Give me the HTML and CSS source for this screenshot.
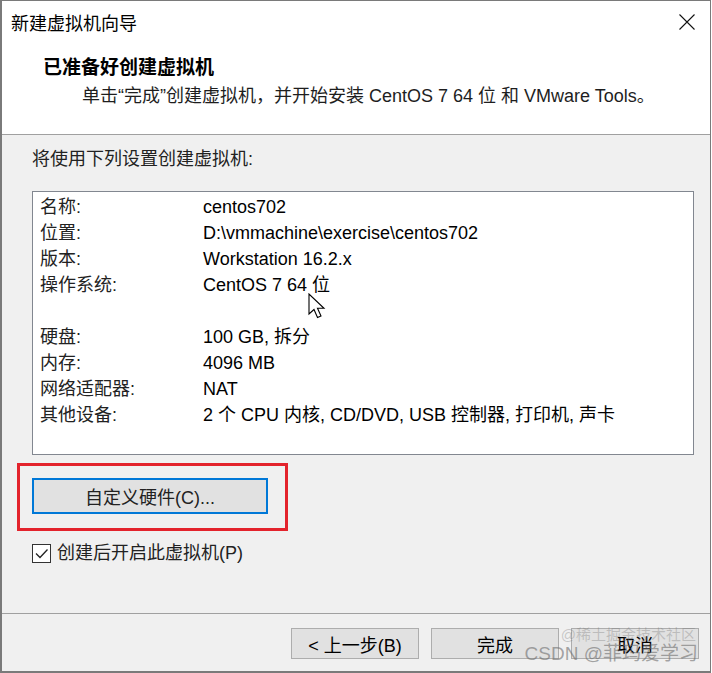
FILE: index.html
```html
<!DOCTYPE html>
<html lang="zh-CN">
<head>
	<meta charset="utf-8">
	<title>新建虚拟机向导</title>
	<link rel="stylesheet" href="styles.css">
</head>
<body>
<div class="window">

	<div class="titlebar">
		<span class="title">新建虚拟机向导</span>
		<svg class="close" width="16" height="16" viewBox="0 0 16 16">
			<path d="M0.5 0.5 L15.5 15.5 M15.5 0.5 L0.5 15.5" stroke="#111" stroke-width="1.1" fill="none"/>
		</svg>
	</div>

	<div class="header">
		<h1>已准备好创建虚拟机</h1>
		<p class="subtitle">单击“完成”创建虚拟机，并开始安装 CentOS 7 64 位 和 VMware Tools。</p>
	</div>

	<div class="body">
		<p class="intro">将使用下列设置创建虚拟机:</p>

		<div class="summary">
			<div class="row"><span class="key">名称:</span><span class="val">centos702</span></div>
			<div class="row"><span class="key">位置:</span><span class="val">D:\vmmachine\exercise\centos702</span></div>
			<div class="row"><span class="key">版本:</span><span class="val">Workstation 16.2.x</span></div>
			<div class="row"><span class="key">操作系统:</span><span class="val">CentOS 7 64 位</span></div>
			<div class="row blank"></div>
			<div class="row"><span class="key">硬盘:</span><span class="val">100 GB, 拆分</span></div>
			<div class="row"><span class="key">内存:</span><span class="val">4096 MB</span></div>
			<div class="row"><span class="key">网络适配器:</span><span class="val">NAT</span></div>
			<div class="row"><span class="key">其他设备:</span><span class="val">2 个 CPU 内核, CD/DVD, USB 控制器, 打印机, 声卡</span></div>
		</div>

		<div class="mark">
			<button class="btn btn-focus">自定义硬件(C)...</button>
		</div>

		<label class="check">
			<span class="box">
				<svg width="15" height="15" viewBox="0 0 15 15">
					<path d="M2 7.5 L6 11.5 L13.5 3.5" stroke="#222" stroke-width="1.3" fill="none"/>
				</svg>
			</span>
			创建后开启此虚拟机(P)
		</label>
	</div>

	<div class="footer">
		<button class="btn">&lt; 上一步(B)</button>
		<button class="btn">完成</button>
		<button class="btn">取消</button>
	</div>

	<!-- mouse pointer from the screenshot -->
	<svg class="pointer" width="19" height="27" viewBox="0 0 19 27">
		<path d="M1 1 L1 21 L6 16.5 L9.5 24.5 L13 23 L9.5 15.3 L16 15.3 Z" fill="#fff" stroke="#000" stroke-width="1.1" stroke-linejoin="miter"/>
	</svg>

	<div class="watermark">
		<span class="wm-top">@稀土掘金技术社区</span>
		<span class="wm-main">CSDN @菲玛爱学习</span>
	</div>
</div>
</body>
</html>
```

FILE: styles.css
```css
/* Reset */

* { margin: 0; padding: 0; box-sizing: border-box; }

body {
	background-color: white;
	font-family: "Liberation Sans", "Noto Sans CJK SC", sans-serif;
	font-size: 18px;
	color: #111;
}


/* Window frame */

.window {
	position: relative;
	display: flex;
	flex-direction: column;
	width: 711px;
	height: 673px;
	border: solid 1px #7a7a7a;
	border-bottom-width: 2px;
	border-left-width: 2px;
	background-color: #f0f0f0;
}


/* Title bar + header */

.titlebar {
	display: flex;
	align-items: center;
	justify-content: space-between;
	height: 42px;
	padding: 0 15px 0 9px;
	background-color: white;
}

.titlebar .title {
	font-size: 18px;
	color: #000;
}

.header {
	background-color: white;
	padding: 12px 0 23px 41px;
	border-bottom: solid 1px #a0a0a0;
}

.header h1 {
	font-size: 19px;
	font-weight: bold;
	line-height: 26px;
	color: #000;
}

.subtitle {
	margin-left: 39px;
	line-height: 30px;
	color: #1e1e1e;
}


/* Body */

.body {
	flex: 1;
	padding: 11px 16px 0 30px;
}

.intro {
	line-height: 26px;
	color: #222;
}

.summary {
	margin-top: 19px;
	height: 264px;
	background-color: white;
	border: solid 1px #828790;
	padding: 2px 0 0 7px;
}

.summary .row {
	display: flex;
	height: 26px;
	line-height: 26px;
}

.summary .key {
	width: 163px;
	color: #222;
}

.summary .val {
	color: #000;
}


/* Red highlight round the button */

.mark {
	width: 271px;
	margin: 8px 0 0 -15px;
	padding: 12px 17px 14px 12px;
	border: solid 3px #e3232c;
}

.btn {
	font-family: "Liberation Sans", "Noto Sans CJK SC", sans-serif;
	font-size: 18px;
	color: #000;
	background-color: #e1e1e1;
	border: solid 1px #adadad;
}

.btn-focus {
	width: 236px;
	height: 36px;
	border: solid 2px #0078d7;
	color: #222;
}


/* Checkbox */

.check {
	display: flex;
	align-items: center;
	gap: 6px;
	margin-top: 12px;
	line-height: 20px;
	color: #222;
}

.check .box {
	display: flex;
	align-items: center;
	justify-content: center;
	width: 19px;
	height: 19px;
	background-color: white;
	border: solid 1px #333;
}


/* Footer buttons */

.footer {
	display: flex;
	justify-content: flex-end;
	gap: 12px;
	height: 58px;
	padding: 14px 11px 0 0;
	border-top: solid 1px #a0a0a0;
}

.footer .btn {
	width: 128px;
	height: 31px;
}


/* Overlays */

.pointer {
	position: absolute;
	left: 306px;
	top: 292px;
}

.watermark {
	position: absolute;
	right: 12px;
	bottom: 6px;
	display: flex;
	flex-direction: column;
	align-items: flex-end;
	pointer-events: none;
}

.wm-top {
	font-size: 15px;
	line-height: 16px;
	color: rgba(120, 120, 120, 0.35);
	margin-right: 2px;
}

.wm-main {
	font-size: 19px;
	line-height: 22px;
	color: rgba(110, 110, 110, 0.6);
}
```
